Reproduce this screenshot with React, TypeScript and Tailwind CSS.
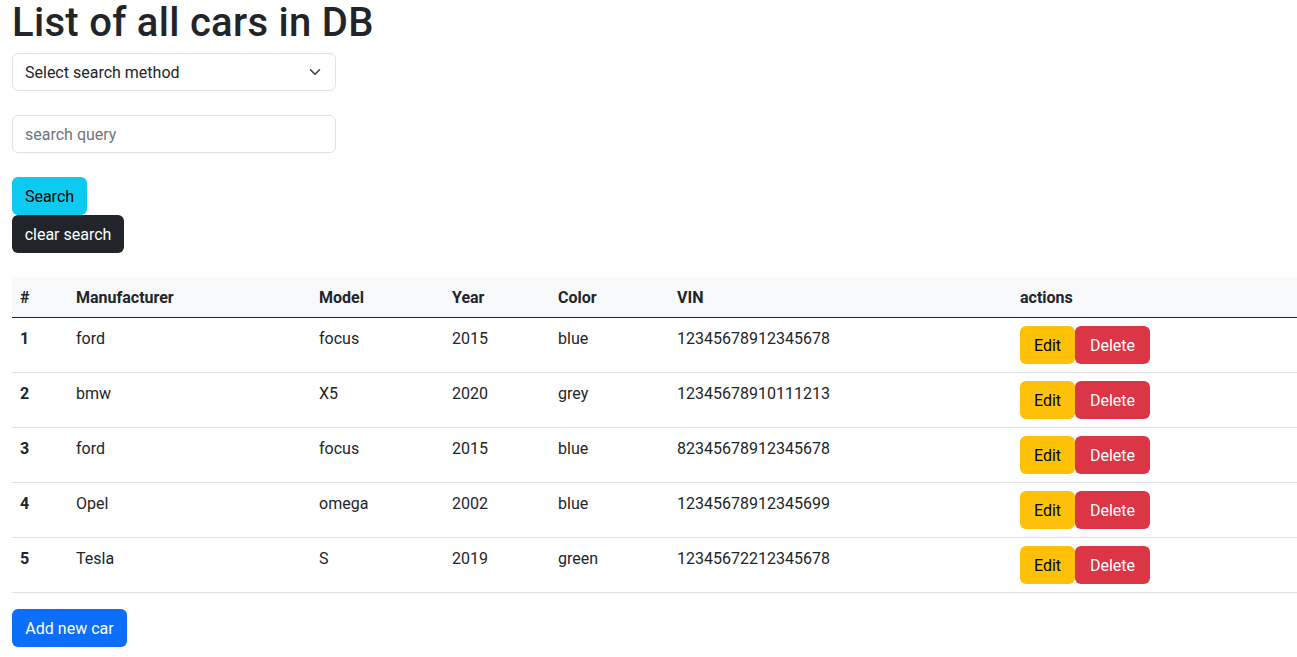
import React from 'react';

const cars = [
  { id: 1, manufacturer: 'ford', model: 'focus', year: 2015, color: 'blue', vin: '12345678912345678' },
  { id: 2, manufacturer: 'bmw', model: 'X5', year: 2020, color: 'grey', vin: '12345678910111213' },
  { id: 3, manufacturer: 'ford', model: 'focus', year: 2015, color: 'blue', vin: '82345678912345678' },
  { id: 4, manufacturer: 'Opel', model: 'omega', year: 2002, color: 'blue', vin: '12345678912345699' },
  { id: 5, manufacturer: 'Tesla', model: 'S', year: 2019, color: 'green', vin: '12345672212345678' },
];

const App = () => {
  return (
    <div className="min-h-screen bg-white pl-3 text-[16px] leading-6 text-[#212529] font-['Roboto',sans-serif]">
      <h1 className="text-[40px] leading-[45px] font-medium mb-2 tracking-[0.3px]">List of all cars in DB</h1>

      <div className="relative w-[324px] h-[38px] border border-[#dee2e6] rounded-md flex items-center pl-3 pt-px">
        <span>Select search method</span>
        <svg className="absolute right-[12px] top-[12px]" width="16" height="12" viewBox="0 0 16 16" fill="none">
          <path d="m2 5 6 6 6-6" stroke="#343a40" strokeWidth="2" strokeLinecap="round" strokeLinejoin="round" />
        </svg>
      </div>

      <input
        placeholder="search query"
        className="mt-6 block w-[324px] h-[38px] border border-[#dee2e6] rounded-md px-3 pt-px placeholder:text-[#6c757d] outline-none"
      />

      <div className="mt-6 flex flex-col items-start">
        <button className="w-[75px] h-[38px] pt-px bg-[#0dcaf0] text-black rounded-md">Search</button>
        <button className="w-[112px] h-[38px] pt-px bg-[#212529] text-white rounded-md">clear search</button>
      </div>

      <table className="mt-6 w-[1285px] border-collapse text-left align-top">
        <thead>
          <tr className="bg-[#f8f9fa] border-b border-[#212529] font-bold">
            <th className="w-[56px] px-2 pt-[9px] pb-[7px]">#</th>
            <th className="w-[243px] px-2 pt-[9px] pb-[7px]">Manufacturer</th>
            <th className="w-[133px] px-2 pt-[9px] pb-[7px]">Model</th>
            <th className="w-[106px] px-2 pt-[9px] pb-[7px]">Year</th>
            <th className="w-[119px] px-2 pt-[9px] pb-[7px]">Color</th>
            <th className="w-[343px] px-2 pt-[9px] pb-[7px]">VIN</th>
            <th className="px-2 pt-[9px] pb-[7px]">actions</th>
          </tr>
        </thead>
        <tbody>
          {cars.map((car) => (
            <tr key={car.id} className="border-b border-[#dee2e6] align-top">
              <td className="px-2 pt-[9px] pb-[7px] font-bold">{car.id}</td>
              <td className="px-2 pt-[9px] pb-[7px]">{car.manufacturer}</td>
              <td className="px-2 pt-[9px] pb-[7px]">{car.model}</td>
              <td className="px-2 pt-[9px] pb-[7px]">{car.year}</td>
              <td className="px-2 pt-[9px] pb-[7px]">{car.color}</td>
              <td className="px-2 pt-[9px] pb-[7px]">{car.vin}</td>
              <td className="p-2">
                <div className="flex">
                  <button className="w-[55px] h-[38px] pt-px bg-[#ffc107] text-black rounded-md">Edit</button>
                  <button className="w-[75px] h-[38px] pt-px bg-[#dc3545] text-white rounded-md">Delete</button>
                </div>
              </td>
            </tr>
          ))}
        </tbody>
      </table>

      <button className="mt-4 w-[115px] h-[38px] pt-px bg-[#0d6efd] text-white rounded-md">Add new car</button>
    </div>
  );
};

export default App;
